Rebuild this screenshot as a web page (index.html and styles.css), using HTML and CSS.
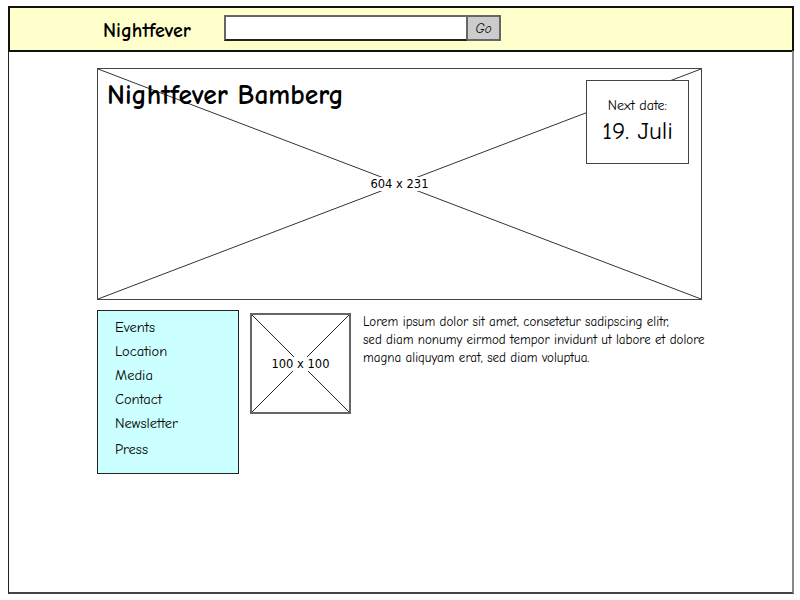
FILE: index.html
```html
<!DOCTYPE html>
<html>
<head>
<meta charset="utf-8">
<link rel="stylesheet" href="styles.css">
</head>
<body>
<div class="page">
  <header class="header">
    <div class="logo">Nightfever</div>
    <div class="search">
      <div class="search-input"></div>
      <div class="search-btn">Go</div>
    </div>
  </header>
  <main class="main">
    <div class="banner">
      <svg class="cross" viewBox="0 0 100 100" preserveAspectRatio="none"><line x1="0" y1="0" x2="100" y2="100" vector-effect="non-scaling-stroke"/><line x1="100" y1="0" x2="0" y2="100" vector-effect="non-scaling-stroke"/></svg>
      <div class="banner-size">604 x 231</div>
      <h1 class="title">Nightfever Bamberg</h1>
      <div class="date-box">
        <div class="date-label">Next date:</div>
        <div class="date-value">19. Juli</div>
      </div>
    </div>
    <div class="content">
      <nav class="nav">
        <a>Events</a>
        <a>Location</a>
        <a>Media</a>
        <a>Contact</a>
        <a>Newsletter</a>
        <a>Press</a>
      </nav>
      <div class="thumb">
        <svg class="cross" viewBox="0 0 100 100" preserveAspectRatio="none"><line x1="0" y1="0" x2="100" y2="100" vector-effect="non-scaling-stroke"/><line x1="100" y1="0" x2="0" y2="100" vector-effect="non-scaling-stroke"/></svg>
        <div class="thumb-size">100 x 100</div>
      </div>
      <p class="text">Lorem ipsum dolor sit amet, consetetur sadipscing elitr,<br>sed diam nonumy eirmod tempor invidunt ut labore et dolore<br>magna aliquyam erat, sed diam voluptua.</p>
    </div>
  </main>
</div>
</body>
</html>
```
FILE: styles.css
```css
* { box-sizing: border-box; }
body {
  margin: 0;
  background: #fff;
  font-family: "Comic Sans MS", "Comic Neue", "DejaVu Sans", sans-serif;
  color: #000;
}
.page {
  margin: 6px 6px 0 8px;
  width: 786px;
}
.header {
  height: 46px;
  background: #ffffcc;
  border: 2px solid #111;
  display: flex;
  align-items: center;
  padding-left: 93px;
}
.logo {
  font-weight: bold;
  font-size: 20px;
  width: 121px;
  margin-top: 2px;
}
.search {
  display: flex;
  height: 26px;
  margin-top: -3px;
}
.search-input {
  width: 243px;
  background: #fff;
  border: 2px solid #666;
  border-right: 1px solid #666;
  border-bottom-color: #222;
}
.search-btn {
  width: 34px;
  background: #cccccc;
  border: 2px solid #666;
  border-left: 1px solid #666;
  font-size: 13px;
  font-style: italic;
  display: flex;
  align-items: center;
  justify-content: center;
  padding-top: 2px;
}
.main {
  height: 543px;
  margin-top: -1px;
  border-left: 1px solid #222;
  border-right: 2px solid #888;
  border-bottom: 2px solid #444;
  padding: 17px 0 0 88px;
}
.banner {
  position: relative;
  width: 605px;
  height: 232px;
  border: 1px solid #444;
  display: flex;
  justify-content: space-between;
  align-items: flex-start;
  padding: 10px 12px 0 9px;
}
.cross {
  position: absolute;
  inset: 0;
  width: 100%;
  height: 100%;
}
.cross line {
  stroke: #333;
  stroke-width: 1;
}
.banner-size, .thumb-size {
  position: absolute;
  left: 50%;
  top: 50%;
  transform: translate(-50%, -50%);
  background: #fff;
  font-family: "DejaVu Sans", sans-serif;
  font-size: 11.5px;
  padding: 0 1px;
  line-height: 14px;
  white-space: nowrap;
}
.title {
  position: relative;
  margin: 0;
  font-size: 27.5px;
  font-weight: bold;
  line-height: 32px;
}
.date-box {
  position: relative;
  margin-top: 1px;
  width: 103px;
  height: 84px;
  background: #fff;
  border: 1px solid #444;
  text-align: center;
  padding-top: 17px;
}
.date-label {
  font-size: 14px;
  line-height: 16px;
}
.date-value {
  font-size: 25px;
  line-height: 30px;
  margin-top: 2px;
}
.content {
  display: flex;
  align-items: flex-start;
  margin-top: 10px;
}
.nav {
  width: 142px;
  height: 164px;
  background: #ccffff;
  border: 1px solid #222;
  display: flex;
  flex-direction: column;
  padding: 8px 0 0 17px;
  gap: 6px;
  font-size: 14.5px;
  line-height: 18px;
}
.nav a:last-child { margin-top: 2px; }
.thumb {
  position: relative;
  width: 101px;
  height: 101px;
  border: 2px solid #666;
  margin: 3px 0 0 11px;
}
.thumb .cross line { stroke: #222; }
.text {
  margin: 3px 0 0 12px;
  font-size: 13px;
  line-height: 18px;
  white-space: nowrap;
}
```
